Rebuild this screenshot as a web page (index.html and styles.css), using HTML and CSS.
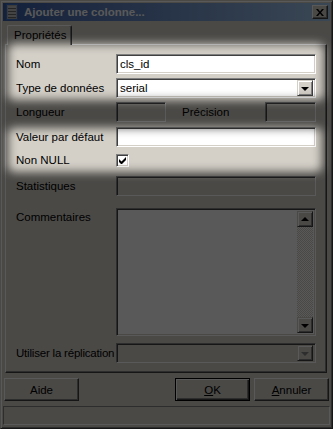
FILE: index.html
```html
<!DOCTYPE html>
<html lang="fr">
<head>
    <meta charset="UTF-8">
    <title>Ajouter une colonne...</title>
    <link rel="stylesheet" href="styles.css">
</head>
<body>
<div class="window">
    <div class="titlebar">
        <svg class="app-icon" width="12" height="16" viewBox="0 0 12 16">
            <rect x="0.5" y="0.5" width="11" height="15" fill="#a8a8a8" stroke="#3a70c8"/>
            <rect x="2" y="2" width="8" height="12" fill="#c4c4c4"/>
            <path d="M2 4.5h8M2 7.5h8M2 10.5h8M2 13.5h8" stroke="#6a6a6a"/>
        </svg>
        <span class="title">Ajouter une colonne...</span>
        <span class="close">
            <svg width="8" height="7" viewBox="0 0 8 7">
                <path d="M0 0h2l2 2.5 2-2.5h2l-3 3.5 3 3.5h-2l-2-2.5-2 2.5h-2l3-3.5z" fill="#000"/>
            </svg>
        </span>
    </div>

    <div class="tabs">
        <div class="tab">Propriétés</div>
    </div>

    <div class="panel">
        <div class="row">
            <label>Nom</label>
            <input class="field" type="text" value="cls_id">
        </div>
        <div class="row">
            <label>Type de données</label>
            <div class="field combo">
                <span class="combo-text">serial</span>
                <span class="arrow-btn"><span class="tri-down"></span></span>
            </div>
        </div>
        <div class="row">
            <label>Longueur</label>
            <div class="field disabled len"></div>
            <label class="mid">Précision</label>
            <div class="field disabled prec"></div>
        </div>
        <div class="row row-val">
            <label>Valeur par défaut</label>
            <input class="field" type="text" value="">
        </div>
        <div class="row row-check">
            <label>Non NULL</label>
            <span class="checkbox">
                <svg width="7" height="7" viewBox="0 0 7 7">
                    <path d="M0 2v3l2 2h1l4-4V0L2.5 4.5z" fill="#000"/>
                </svg>
            </span>
        </div>
        <div class="row row-stat">
            <label>Statistiques</label>
            <div class="field disabled"></div>
        </div>
        <div class="row row-comment">
            <label>Commentaires</label>
            <div class="field memo">
                <div class="memo-text"></div>
                <div class="scrollbar">
                    <span class="arrow-btn"><span class="tri-up"></span></span>
                    <span class="track"></span>
                    <span class="arrow-btn"><span class="tri-down"></span></span>
                </div>
            </div>
        </div>
        <div class="row row-rep">
            <label>Utiliser la réplication</label>
            <div class="field combo disabled">
                <span class="combo-text"></span>
                <span class="arrow-btn"><span class="tri-down grey"></span></span>
            </div>
        </div>
    </div>

    <div class="buttons">
        <span class="btn">Aide</span>
        <span class="spacer"></span>
        <span class="btn default"><u>O</u>K</span>
        <span class="btn"><u>A</u>nnuler</span>
    </div>

    <div class="status"></div>
</div>

<svg class="spotlight" width="333" height="429" viewBox="0 0 333 429">
    <defs>
        <filter id="soft" x="-20%" y="-40%" width="140%" height="180%">
            <feGaussianBlur stdDeviation="5"/>
        </filter>
        <mask id="holes">
            <rect width="333" height="429" fill="#fff"/>
            <g filter="url(#soft)">
                <rect x="8" y="44" width="316" height="56" rx="6" fill="#000"/>
                <rect x="8" y="128" width="314" height="44" rx="6" fill="#000"/>
            </g>
        </mask>
    </defs>
    <rect width="333" height="429" fill="#000" fill-opacity="0.65" mask="url(#holes)"/>
</svg>
</body>
</html>
```

FILE: styles.css
```css
* {
    box-sizing: border-box;
}
body {
    margin: 0;
    position: relative;
    width: 333px;
    height: 429px;
    overflow: hidden;
    font-family: "Liberation Sans", Arial, sans-serif;
    font-size: 11.5px;
    color: #000;
}
.window {
    width: 333px;
    height: 429px;
    background: #d4d0c8;
    border: 1px solid;
    border-color: #d4d0c8 #404040 #404040 #d4d0c8;
    box-shadow: inset 1px 1px #fff, inset -1px -1px #808080;
    padding: 2px;
    display: flex;
    flex-direction: column;
}
.titlebar {
    height: 18px;
    display: flex;
    align-items: center;
    padding: 0 2px 0 2px;
    background: linear-gradient(90deg, #3a5ea8, #a6caf0);
}
.app-icon {
    margin-left: 1px;
    margin-right: 6px;
}
.title {
    flex: 1;
    color: #fff;
    font-weight: bold;
    font-size: 11.5px;
}
.close {
    width: 16px;
    height: 14px;
    display: flex;
    align-items: center;
    justify-content: center;
    background: #d4d0c8;
    border: 1px solid;
    border-color: #fff #404040 #404040 #fff;
    box-shadow: inset -1px -1px #808080;
}

.tabs {
    margin-top: 4px;
    padding-left: 4px;
    display: flex;
}
.tab {
    height: 20px;
    width: 65px;
    padding: 3px 0 0 6px;
    white-space: nowrap;
    border: 1px solid;
    border-bottom: none;
    border-color: #fff #404040 #404040 #fff;
    border-radius: 2px 2px 0 0;
    box-shadow: inset -1px 0 #808080;
    margin-bottom: -1px;
    background: #d4d0c8;
    position: relative;
}

.panel {
    height: 329px;
    margin: 0 3px 0 2px;
    border: 1px solid;
    border-color: #fff #404040 #404040 #fff;
    box-shadow: inset -1px -1px #808080;
    padding: 9px 0 8px 10px;
    display: flex;
    flex-direction: column;
}
.row {
    display: flex;
    align-items: center;
    height: 20px;
    margin-top: 4px;
}
.row:first-child {
    margin-top: 0;
}
.row label {
    width: 100px;
    flex: none;
    white-space: nowrap;
}
.row label.mid {
    width: 83px;
    margin-left: 16px;
}
.row-val { margin-top: 5px; }
.row-check { margin-top: 3px; }
.row-stat { margin-top: 6px; }
.row-comment {
    margin-top: 12px;
    height: 128px;
    align-items: flex-start;
}
.row-comment label {
    padding-top: 3px;
}
.row-rep { margin-top: 7px; }
.row-rep label {
    letter-spacing: -0.2px;
}

.field {
    width: 200px;
    height: 20px;
    margin: 0;
    padding: 0 3px;
    font: inherit;
    color: #000;
    background: #fff;
    border: 1px solid;
    border-color: #808080 #fff #fff #808080;
    box-shadow: inset 1px 1px #404040, inset -1px -1px #d4d0c8;
    outline: none;
    display: flex;
    align-items: center;
}
.field.disabled {
    background: #d4d0c8;
}
.field.len {
    width: 50px;
}
.field.prec {
    width: 51px;
}
.combo {
    padding: 2px 2px 2px 3px;
}
.combo-text {
    flex: 1;
}
.arrow-btn {
    width: 16px;
    height: 16px;
    flex: none;
    display: flex;
    align-items: center;
    justify-content: center;
    background: #d4d0c8;
    border: 1px solid;
    border-color: #d4d0c8 #404040 #404040 #d4d0c8;
    box-shadow: inset 1px 1px #fff, inset -1px -1px #808080;
}
.tri-down, .tri-up {
    width: 0;
    height: 0;
    border-left: 4px solid transparent;
    border-right: 4px solid transparent;
}
.tri-down {
    border-top: 4px solid #000;
    margin-top: 1px;
}
.tri-down.grey {
    border-top-color: #808080;
}
.tri-up {
    border-bottom: 4px solid #000;
    margin-bottom: 1px;
}
.memo {
    height: 128px;
    padding: 2px;
    align-items: stretch;
}
.memo-text {
    flex: 1;
}
.scrollbar {
    width: 16px;
    display: flex;
    flex-direction: column;
}
.track {
    flex: 1;
    background: repeating-conic-gradient(#fff 0 25%, #d4d0c8 0 50%) 0 0 / 2px 2px;
}

.checkbox {
    width: 13px;
    height: 13px;
    display: flex;
    align-items: center;
    justify-content: center;
    background: #fff;
    border: 1px solid;
    border-color: #808080 #fff #fff #808080;
    box-shadow: inset 1px 1px #404040, inset -1px -1px #d4d0c8;
}

.buttons {
    margin-top: 5px;
    height: 23px;
    display: flex;
    padding: 0 1px 0 1px;
}
.spacer {
    flex: 1;
}
.btn {
    width: 75px;
    height: 23px;
    display: flex;
    align-items: center;
    justify-content: center;
    background: #d4d0c8;
    border: 1px solid;
    border-color: #fff #404040 #404040 #fff;
    box-shadow: inset -1px -1px #808080, inset 1px 1px #d4d0c8;
}
.btn + .btn {
    margin-left: 4px;
}
.btn.default {
    border: 1px solid #000;
    box-shadow: inset 1px 1px #fff, inset -1px -1px #404040, inset -2px -2px #808080;
}

.status {
    margin-top: 5px;
    height: 19px;
    border: 1px solid;
    border-color: #808080 #fff #fff #808080;
}

.spotlight {
    position: absolute;
    top: 0;
    left: 0;
    pointer-events: none;
}
```
